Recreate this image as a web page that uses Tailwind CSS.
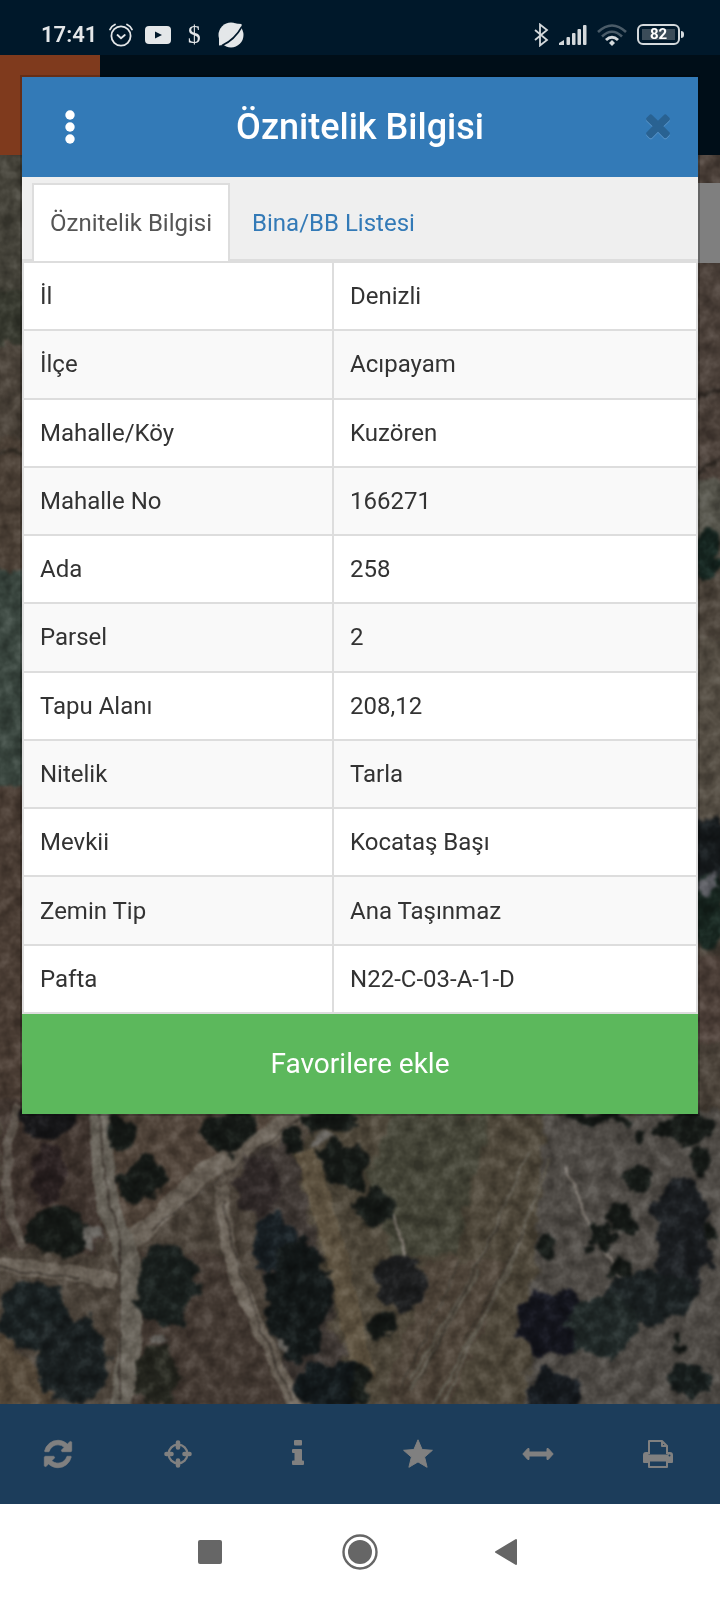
<!DOCTYPE html>
<html lang="tr">
<head>
  <meta charset="UTF-8" />
  <meta name="viewport" content="width=device-width, initial-scale=1" />
  <title>Öznitelik Bilgisi</title>
  <script src="https://cdn.jsdelivr.net/npm/@tailwindcss/browser@4"></script>
</head>
<body class="relative min-h-screen flex flex-col bg-white font-['Roboto',sans-serif] text-[#333]">

  <!-- Durum çubuğu -->
  <div class="h-[55px] bg-[#00182a] flex items-center justify-between pl-[41px] pr-9 pt-3.5 text-[#e4e7e9]">
    <div class="flex items-center gap-[11px]">
      <span class="text-[22px] leading-6 font-semibold">17:41</span>
      <svg class="w-[26px] h-6" viewBox="0 0 26 24" fill="none" stroke="currentColor" stroke-width="1.8" stroke-linecap="round">
        <circle cx="13" cy="13" r="9.6" /><path d="M9.5 12l3.5 3.2 3.8-3.2M2 6.5Q3.5 3 7 1.5M24 6.5Q22.5 3 19 1.5" />
      </svg>
      <svg class="w-[26px] h-[18px]" viewBox="0 0 26 18">
        <rect width="26" height="18" rx="4" fill="currentColor" /><path d="M10 5.5v7l7-3.5z" fill="#00182a" />
      </svg>
      <span class="w-6 text-center font-['Liberation_Serif',serif] text-[26px] leading-6">$</span>
      <svg class="w-7 h-[26px]" viewBox="0 0 28 26">
        <circle cx="14" cy="13" r="12.500" fill="currentColor" />
        <path d="M18 1.500l6.500.500.500 6M2 15.500v8l8-1" fill="currentColor" />
        <path d="M5 23.500Q17.500 18 25 4.500" fill="none" stroke="#00182a" stroke-width="1.600" />
      </svg>
    </div>
    <div class="flex items-center gap-2.5">
      <svg class="w-4 h-6" viewBox="0 0 16 24" fill="none" stroke="#d4d9dc" stroke-width="1.8"><path d="M2 7l12 10-7 5.500V1.500L14 7 2 17" /></svg>
      <svg class="w-7 h-5" viewBox="0 0 28 20" fill="#d4d9dc">
        <path d="M0 20v-2l5-3v5z" /><rect x="7.500" y="12" width="3.500" height="8" rx="1" /><rect x="13" y="8" width="3.500" height="12" rx="1" /><rect x="18.500" y="4" width="3.500" height="16" rx="1" /><rect x="24" y="0" width="3.500" height="20" rx="1" />
      </svg>
      <svg class="w-[30px] h-[22px]" viewBox="0 0 30 22" fill="none" stroke="#d4d9dc" stroke-width="2.600">
        <path d="M1 8Q15-5 29 8M5 12.500Q15 3 25 12.500" opacity=".35" /><path d="M9 16Q15 10.500 21 16" stroke-width="3" /><path d="M15 16l3 3-3 3-3-3z" fill="#d4d9dc" stroke="none" />
      </svg>
      <div class="flex items-center gap-px">
        <div class="w-[43px] h-[21px] border-2 border-[#d4d9dc] rounded-md p-[3px]">
          <div class="h-full bg-[#3b4c59] text-[15px] leading-[11px] font-bold text-white text-center">82</div>
        </div>
        <div class="w-[3px] h-[7px] bg-[#d4d9dc] rounded-r"></div>
      </div>
    </div>
  </div>

  <div class="h-[100px] bg-[#000e18]">
    <div class="w-[100px] h-full bg-[#7f3a1d]"></div>
  </div>

  <!-- Harita -->
  <main class="relative flex-1 overflow-hidden bg-[#4b443c]">
    <svg class="absolute inset-0 w-full h-full" viewBox="0 155 720 1249" preserveAspectRatio="xMidYMid slice" aria-hidden="true">
      <defs>
        <filter id="kenar" x="-5%" y="-5%" width="110%" height="110%" color-interpolation-filters="sRGB">
          <feTurbulence type="fractalNoise" baseFrequency=".05" numOctaves="4" seed="4" />
          <feDisplacementMap in="SourceGraphic" scale="26" xChannelSelector="R" yChannelSelector="G" />
          <feGaussianBlur stdDeviation="1.500" />
        </filter>
        <filter id="yol" x="-5%" y="-5%" width="110%" height="110%" color-interpolation-filters="sRGB">
          <feTurbulence type="fractalNoise" baseFrequency=".05" numOctaves="2" seed="4" />
          <feDisplacementMap in="SourceGraphic" scale="8" xChannelSelector="R" yChannelSelector="G" />
          <feGaussianBlur stdDeviation="1.200" />
        </filter>
        <filter id="doku" x="0" y="0" width="100%" height="100%" color-interpolation-filters="sRGB">
          <feTurbulence type="fractalNoise" baseFrequency=".07" numOctaves="3" seed="9" />
          <feColorMatrix values="1.600 0 0 0 -.320  1.600 0 0 0 -.320  1.600 0 0 0 -.320  0 0 0 0 .350" />
        </filter>
      </defs>
      <rect y="155" width="720" height="1249" fill="#4b433a" />
      <g filter="url(#kenar)">
        <!-- sol ve sağ kenar -->
        <path d="M-20 150h60v140h-60z" fill="#45433a" /><path d="M-20 290h60v55h-60z" fill="#37392f" />
        <path d="M-20 440h60v130h-60z" fill="#4a3f35" /><path d="M-20 570h60v220h-60z" fill="#3a463f" />
        <path d="M-20 790h60v330h-60z" fill="#4a3d34" /><path d="M-20 448h60v5h-60z" fill="#2b261f" />
        <path d="M680 150h60v370h-60z" fill="#4b4039" /><path d="M680 400l60-15M680 475l60-25" stroke="#2b2520" stroke-width="5" />
        <path d="M680 480h60v60h-60z" fill="#54534a" /><path d="M680 640h60v180h-60z" fill="#554e44" />
        <ellipse cx="707" cy="556" rx="14" ry="25" fill="#15241f" /><ellipse cx="710" cy="850" rx="20" ry="36" fill="#15191b" />
        <ellipse cx="708" cy="910" rx="18" ry="38" fill="#17251f" /><path d="M700 880l15-12v14l-15 10z" fill="#57585e" />
        <path d="M680 955h60v90h-60z" fill="#4d4039" />

        <!-- tarlalar -->
        <path d="M0 1100h100v150H0z" fill="#40352f" /><path d="M110 1100h190l-150 130h-35z" fill="#50443a" />
        <path d="M295 1150l60 254h180l10-290H330z" fill="#4e473a" />
        <path d="M390 1115h100l-35 140h-60l-25-80z" fill="#454538" />
        <path d="M430 1260h80l-60 150h-70z" fill="#4f453a" />
        <path d="M545 1110h200v300H525z" fill="#4f4b46" />
        <path d="M140 1250h80l70 160H135z" fill="#443a33" /><path d="M0 1325l60 85H-20z" fill="#564a3b" />
        <path d="M240 1150l50-10 60 250h-60z" fill="#413a36" />
      </g>

      <!-- yollar -->
      <g fill="none" stroke="#6b6359" filter="url(#yol)">
        <path d="M315 1105L205 1172 125 1248" stroke-width="19" />
        <path d="M103 1100Q96 1190 120 1235T120 1410" stroke="#68635a" stroke-width="23" />
        <path d="M-10 1264Q70 1270 115 1282" stroke-width="15" />
        <path d="M222 1185Q224 1260 250 1310T296 1410" stroke-width="14" />
        <path d="M18 1105Q-8 1190 24 1248" stroke="#5a524a" stroke-width="9" />
        <path d="M100 1110Q102 1190 120 1235V1400M0 1268l80 10M225 1200Q230 1270 292 1400M300 1118L150 1230" stroke="#453e37" stroke-width="2" />
        <path d="M305 1150l30 100 30 130" stroke="#5e5341" stroke-width="22" />
        <path d="M392 1215l15 42" stroke="#777168" stroke-width="3" />
        <path d="M567 1165l20 55 40 70" stroke="#77716a" stroke-width="3" />
        <path d="M550 1160l-40 110-80 140M530 1150l-60 130-60 100M515 1250l-70 150M480 1270l-70 120" stroke="#5f5a4f" stroke-width="3" />
        <path d="M525 1230l-60 110M500 1220l-80 160M460 1260l-60 130" stroke="#403a31" stroke-width="2" />
      </g>

      <!-- ağaçlar -->
      <g fill="#151916" filter="url(#kenar)">
        <ellipse cx="47" cy="1120" rx="28" ry="17" fill="#171719" /><ellipse cx="48" cy="1175" rx="19" ry="30" fill="#292020" />
        <ellipse cx="57" cy="1232" rx="30" ry="24" /><ellipse cx="143" cy="1180" rx="27" ry="21" /><ellipse cx="122" cy="1135" rx="12" ry="18" />
        <ellipse cx="230" cy="1132" rx="24" ry="23" /><ellipse cx="330" cy="1121" rx="28" ry="12" /><ellipse cx="293" cy="1142" rx="10" ry="12" />
        <ellipse cx="345" cy="1165" rx="25" ry="25" /><ellipse cx="375" cy="1205" rx="19" ry="20" /><ellipse cx="400" cy="1281" rx="28" ry="29" fill="#1d1e1f" />
        <ellipse cx="382" cy="1325" rx="14" ry="14" /><ellipse cx="168" cy="1284" rx="31" ry="42" fill="#191f1d" />
        <ellipse cx="35" cy="1315" rx="35" ry="34" fill="#1a2122" /><ellipse cx="72" cy="1360" rx="38" ry="42" fill="#1a2021" />
        <ellipse cx="156" cy="1377" rx="24" ry="27" fill="#25261f" /><ellipse cx="258" cy="1185" rx="22" ry="30" fill="#302928" />
        <ellipse cx="275" cy="1242" rx="22" ry="28" fill="#181f23" /><ellipse cx="298" cy="1300" rx="31" ry="62" fill="#131818" />
        <ellipse cx="331" cy="1385" rx="39" ry="24" fill="#13191b" /><ellipse cx="362" cy="1385" rx="10" ry="18" />
        <ellipse cx="600" cy="1118" rx="34" ry="7" /><ellipse cx="685" cy="1128" rx="28" ry="16" /><ellipse cx="702" cy="1160" rx="9" ry="16" />
        <ellipse cx="637" cy="1177" rx="15" ry="11" /><ellipse cx="620" cy="1217" rx="16" ry="13" /><ellipse cx="604" cy="1238" rx="13" ry="11" />
        <ellipse cx="545" cy="1246" rx="8" ry="10" /><ellipse cx="591" cy="1253" rx="7" ry="6" /><ellipse cx="620" cy="1265" rx="13" ry="10" />
        <ellipse cx="682" cy="1235" rx="28" ry="58" fill="#1b1e21" /><ellipse cx="650" cy="1296" rx="45" ry="27" fill="#1b2122" />
        <ellipse cx="552" cy="1324" rx="34" ry="35" fill="#14151d" /><ellipse cx="604" cy="1325" rx="34" ry="31" fill="#202827" />
        <ellipse cx="555" cy="1393" rx="28" ry="24" fill="#15191d" /><ellipse cx="690" cy="1380" rx="24" ry="16" fill="#171d1c" />
        <ellipse cx="677" cy="1344" rx="7" ry="6" /><ellipse cx="714" cy="1233" rx="6" ry="7" /><ellipse cx="640" cy="1138" rx="6" ry="4" />
        <path d="M150 1336h18v10h-18zM83 1232h14v12h-14zM275 1339h10v10h-10zM317 1136h18v7h-18z" fill="#6a6762" />
      </g>
      <rect y="155" width="720" height="1249" filter="url(#doku)" class="mix-blend-soft-light" />
      <path d="M698 183h22v80h-22z" fill="#7f7f7f" />
    </svg>
  </main>

  <!-- Harita araçları -->
  <div class="h-[100px] bg-[#1c3d5b] grid grid-cols-6 text-[#808080]">
    <button class="flex items-center justify-center pr-1" aria-label="Yenile">
      <svg class="w-8 h-8" viewBox="0 0 1792 1792" fill="currentColor"><path d="M1639 1056q0 5-1 7-64 268-268 434.500t-478 166.500q-146 0-282.500-55t-243.500-157l-129 129q-19 19-45 19t-45-19-19-45v-448q0-26 19-45t45-19h448q26 0 45 19t19 45-19 45l-137 137q71 66 161 102t187 36q134 0 250-65t186-179q11-17 53-117 8-23 30-23h192q13 0 22.500 9.500t9.500 22.500zm25-800v448q0 26-19 45t-45 19h-448q-26 0-45-19t-19-45 19-45l138-138q-148-137-349-137-134 0-250 65t-186 179q-11 17-53 117-8 23-30 23h-199q-13 0-22.500-9.500t-9.500-22.500v-7q65-268 270-434.500t480-166.500q146 0 284 55.500t245 156.500l130-129q19-19 45-19t45 19 19 45z" stroke="currentColor" stroke-width="40" /></svg>
    </button>
    <button class="flex items-center justify-center pr-1" aria-label="Konum">
      <svg class="w-7 h-7" viewBox="0 0 28 28" fill="none" stroke="currentColor"><circle cx="14" cy="14" r="9.400" stroke-width="2.200" /><path d="M14 2.500v5M14 20.500v5M2.500 14h5M20.500 14h5" stroke-width="4.600" stroke-linecap="round" /></svg>
    </button>
    <button class="flex items-center justify-center pr-1" aria-label="Bilgi">
      <svg class="w-7 h-7" viewBox="0 0 28 28" fill="currentColor"><rect x="10" y="0" width="8" height="5.500" rx="1" /><path d="M9 9h8q1 0 1 1v10.500h1q1 0 1 1V24q0 1-1 1H9q-1 0-1-1v-2.500q0-1 1-1h1.500V13H9q-1 0-1-1v-2q0-1 1-1z" /></svg>
    </button>
    <button class="flex items-center justify-center pr-1" aria-label="Favoriler">
      <svg class="w-[30px] h-[30px]" viewBox="0 0 30 30" fill="currentColor" stroke="currentColor" stroke-linejoin="round"><path d="M15 .800l4.100 9.700 10.300.800-7.800 6.800 2.500 10.200-9.100-5.400-9.100 5.400 2.500-10.200L.6 11.300l10.300-.800z" /></svg>
    </button>
    <button class="flex items-center justify-center pr-1" aria-label="Ölçüm">
      <svg class="w-8 h-4" viewBox="0 0 32 16" fill="currentColor" stroke="currentColor" stroke-linejoin="round"><path d="M.800 8l5-5.500h1.200V6h18V2.500h1.200l5 5.500-5 5.500H25V10H7v3.500H5.800z" /></svg>
    </button>
    <button class="flex items-center justify-center pr-1" aria-label="Yazdır">
      <svg class="w-[30px] h-7" viewBox="0 0 30 28" fill="none" stroke="currentColor" stroke-width="2" stroke-linejoin="round"><path d="M6 14V1h13l5 5v8M19 1v5h5" /><path d="M1 22v-7q0-2 2-2h1.500v2.500h21V13H27q2 0 2 2v7h-4v-2.500H5V22z" fill="currentColor" /><path d="M6 20.500h18V27H6z" fill="#1c3d5b" /><circle cx="26.500" cy="15.500" r="1" fill="#1c3d5b" stroke="none" /></svg>
    </button>
  </div>

  <!-- Sistem gezinme -->
  <nav class="h-24 bg-white flex justify-center text-[#666]">
    <button class="w-[150px] flex items-center justify-center" aria-label="Son uygulamalar"><span class="size-6 rounded-xs bg-[#666]"></span></button>
    <button class="w-[150px] flex items-center justify-center" aria-label="Ana ekran">
      <svg class="w-9 h-9" viewBox="0 0 36 36"><circle cx="18" cy="18" r="16.500" fill="none" stroke="currentColor" stroke-width="2.400" /><circle cx="18" cy="18" r="12" fill="currentColor" /></svg>
    </button>
    <button class="w-[150px] flex items-center justify-center pr-2" aria-label="Geri">
      <svg class="w-6 h-7" viewBox="0 0 24 28"><path d="M2 14L22 2v24z" fill="currentColor" stroke="currentColor" stroke-width="2" stroke-linejoin="round" /></svg>
    </button>
  </nav>

  <!-- Öznitelik penceresi -->
  <section role="dialog" aria-labelledby="baslik" class="absolute inset-x-5 top-[75px] border-2 border-black/20 bg-white bg-clip-padding">
    <header class="h-[100px] bg-[#337ab7] flex items-center text-white">
      <button class="w-24 h-full flex items-center justify-center" aria-label="Menü">
        <svg class="w-[10px] h-[34px]" viewBox="0 0 10 34" fill="currentColor"><circle cx="5" cy="5" r="4.700" /><circle cx="5" cy="17" r="4.700" /><circle cx="5" cy="29" r="4.700" /></svg>
      </button>
      <h1 id="baslik" class="flex-1 text-center text-4xl font-medium">Öznitelik Bilgisi</h1>
      <button class="w-24 h-full flex items-center justify-center pl-4 pb-1" aria-label="Kapat">
        <svg class="w-9 h-9 drop-shadow-[0_1px_0_#5b96ca]" viewBox="0 0 1792 1792" fill="#296292"><path d="M1490 1322q0 40-28 68l-136 136q-28 28-68 28t-68-28l-294-294-294 294q-28 28-68 28t-68-28l-136-136q-28-28-28-68t28-68l294-294-294-294q-28-28-28-68t28-68l136-136q28-28 68-28t68 28l294 294 294-294q28-28 68-28t68 28l136 136q28 28 28 68t-28 68l-294 294 294 294q28 28 28 68z" /></svg>
      </button>
    </header>

    <div role="tablist" class="flex px-2.5 pt-1.5 bg-[#efefef] border-b-2 border-[#ddd] text-2xl leading-9">
      <button role="tab" aria-selected="true" class="-mb-0.5 px-4 py-5 border-2 border-b-0 border-[#ddd] bg-white text-[#555]">Öznitelik Bilgisi</button>
      <button role="tab" aria-selected="false" class="-mb-0.5 px-5 py-5 border-2 border-b-0 border-transparent text-[#337ab7]">Bina/BB Listesi</button>
    </div>

    <table class="w-full h-[753px] table-fixed border-collapse border-2 border-[#ddd] text-2xl leading-8 text-left">
      <colgroup><col class="w-[46%]" /><col /></colgroup>
      <tbody id="oznitelikler"></tbody>
    </table>

    <button id="btnFavori" class="block w-full h-[100px] bg-[#5cb85c] text-[28px] text-white">Favorilere ekle</button>
  </section>

  <script>
    const oznitelikler = [
      ['İl', 'Denizli'],
      ['İlçe', 'Acıpayam'],
      ['Mahalle/Köy', 'Kuzören'],
      ['Mahalle No', '166271'],
      ['Ada', '258'],
      ['Parsel', '2'],
      ['Tapu Alanı', '208,12'],
      ['Nitelik', 'Tarla'],
      ['Mevkii', 'Kocataş Başı'],
      ['Zemin Tip', 'Ana Taşınmaz'],
      ['Pafta', 'N22-C-03-A-1-D'],
    ];

    document.getElementById('oznitelikler').innerHTML = oznitelikler.map(([ad, deger]) => `
      <tr class="odd:bg-white even:bg-[#f9f9f9]">
        <th scope="row" class="border-2 border-[#ddd] px-4 font-normal">${ad}</th>
        <td class="border-2 border-[#ddd] px-4">${deger}</td>
      </tr>
    `).join('');
  </script>
</body>
</html>
